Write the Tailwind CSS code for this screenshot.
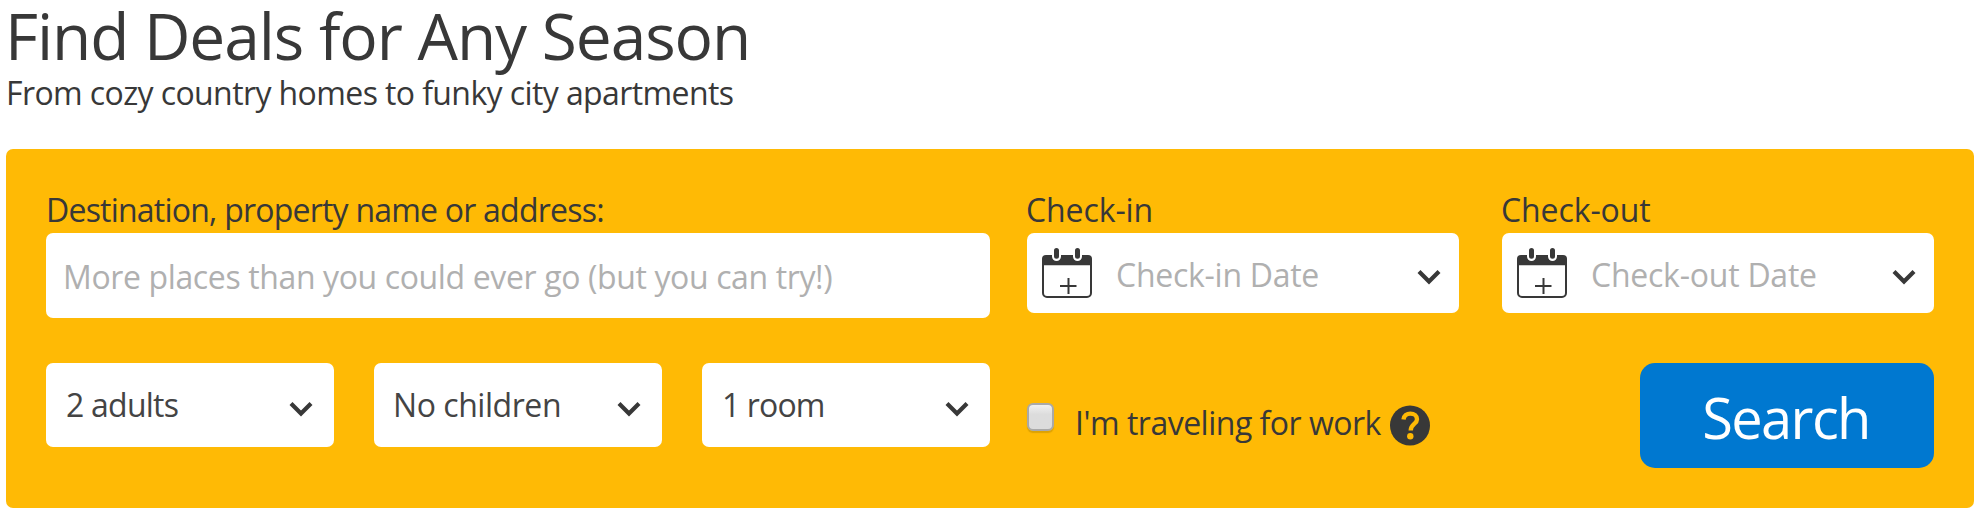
<!DOCTYPE html>
<html lang="en">
<head>
<meta charset="utf-8">
<title>Find Deals for Any Season</title>
<script src="https://cdn.jsdelivr.net/npm/@tailwindcss/browser@4"></script>
</head>
<body class="bg-white text-[#383838] text-[32px] font-['Open_Sans',sans-serif] whitespace-nowrap overflow-hidden">
<svg class="hidden">
  <symbol id="chevron" viewBox="0 0 24 16">
    <path d="M2 2.5 L12 12.5 L22 2.5" fill="none" stroke="#383838" stroke-width="4.2"/>
  </symbol>
  <symbol id="calendar" viewBox="0 0 50 50">
    <rect x="1" y="9" width="48" height="40" rx="4" fill="#fff" stroke="#383838" stroke-width="2"/>
    <path d="M0 17.2V11a4 4 0 0 1 4-4H46a4 4 0 0 1 4 4V17.2Z" fill="#383838"/>
    <path d="M14.5 3V8.500M35.500 3V8.500" stroke="#fff" stroke-width="9" stroke-linecap="round"/>
    <path d="M14.500 2.500V8.300M35.500 2.500V8.300" stroke="#383838" stroke-width="5" stroke-linecap="round"/>
    <path d="M18 38H34.500M26.500 30V46" stroke="#383838" stroke-width="2"/>
  </symbol>
</svg>
<main class="pl-[6px] pr-[6px]">
  <h1 class="text-[64px] leading-[72px] tracking-[-1.05px] -ml-px">Find Deals for Any Season</h1>
  <p class="leading-[41px] tracking-[-0.6px]">From cozy country homes to funky city apartments</p>

  <form class="mt-[36px] h-[359px] rounded-[7px] bg-[#ffba05] p-10 grid grid-cols-[944px_907px] gap-x-[37px] grid-rows-[129px_105px] gap-y-[45px]">
    <div>
      <div class="leading-[41px] mb-[3px] tracking-[-0.78px]">Destination, property name or address:</div>
      <div class="h-[85px] bg-white rounded-[7px] flex items-center pl-[17px] pt-[2px] text-[#b0b0b0] tracking-[-0.375px]">More places than you could ever go (but you can try!)</div>
    </div>

    <div class="flex gap-[43px]">
      <div class="w-[432px]">
        <div class="leading-[41px] mb-[3px] -ml-px tracking-[-0.1px]">Check-in</div>
        <div class="h-20 bg-white rounded-[7px] flex items-center pl-[15px] pr-[18px]">
          <svg class="w-[50px] h-[50px]"><use href="#calendar"/></svg>
          <span class="ml-6 pt-[3px] grow text-[#b0b0b0] tracking-[-0.27px]">Check-in Date</span>
          <svg class="w-6 h-4 mt-[8px]"><use href="#chevron"/></svg>
        </div>
      </div>
      <div class="w-[432px]">
        <div class="leading-[41px] mb-[3px] -ml-px tracking-[-0.1px]">Check-out</div>
        <div class="h-20 bg-white rounded-[7px] flex items-center pl-[15px] pr-[18px]">
          <svg class="w-[50px] h-[50px]"><use href="#calendar"/></svg>
          <span class="ml-6 pt-[3px] grow text-[#b0b0b0] tracking-[-0.24px]">Check-out Date</span>
          <svg class="w-6 h-4 mt-[8px]"><use href="#chevron"/></svg>
        </div>
      </div>
    </div>

    <div class="flex gap-10">
      <div class="w-72 h-[84px] bg-white rounded-[7px] flex items-center justify-between pl-5 pr-[21px]">
        <span class="text-[#444] tracking-[-0.77px]">2 adults</span>
        <svg class="w-6 h-4 mt-[7px]"><use href="#chevron"/></svg>
      </div>
      <div class="w-72 h-[84px] bg-white rounded-[7px] flex items-center justify-between pl-[19px] pr-[21px]">
        <span class="text-[#444] tracking-[-0.45px]">No children</span>
        <svg class="w-6 h-4 mt-[7px]"><use href="#chevron"/></svg>
      </div>
      <div class="w-72 h-[84px] bg-white rounded-[7px] flex items-center justify-between pl-5 pr-[21px]">
        <span class="text-[#444] tracking-[-0.88px]">1 room</span>
        <svg class="w-6 h-4 mt-[7px]"><use href="#chevron"/></svg>
      </div>
    </div>

    <div class="flex justify-between">
      <div class="flex items-start pt-[36px]">
        <span class="mt-1 w-[27px] h-[28px] rounded-[6px] border-2 border-[#a9a9a9] bg-linear-to-b from-[#f0f0f0] to-[#dcdcdc] to-40% shadow-[0_2px_1px_rgba(120,90,0,0.25)]"></span>
        <span class="ml-[21px] leading-[47px] w-[309px] tracking-[-0.5px]">I'm traveling for work</span>
        <svg class="ml-[6px] mt-[6px] w-[40px] h-[41px]" viewBox="0 0 40 41">
          <circle cx="20" cy="20.500" r="20" fill="#383838"/>
          <path d="M13.500 14.500C14 10.500 17 8.600 20.300 8.600C24.300 8.600 27 10.900 27 14.200C27 19.200 20.700 18.800 20.700 25.500" fill="none" stroke="#ffba05" stroke-width="4.400"/>
          <circle cx="20.300" cy="31.300" r="3.200" fill="#ffba05"/>
        </svg>
      </div>
      <button type="button" class="w-[294px] h-[105px] rounded-[15px] bg-[#0078d0] text-white text-[56px] leading-[101px] tracking-[-1.6px] pt-1 pr-[2px] flex items-center justify-center">Search</button>
    </div>
  </form>
</main>
</body>
</html>
